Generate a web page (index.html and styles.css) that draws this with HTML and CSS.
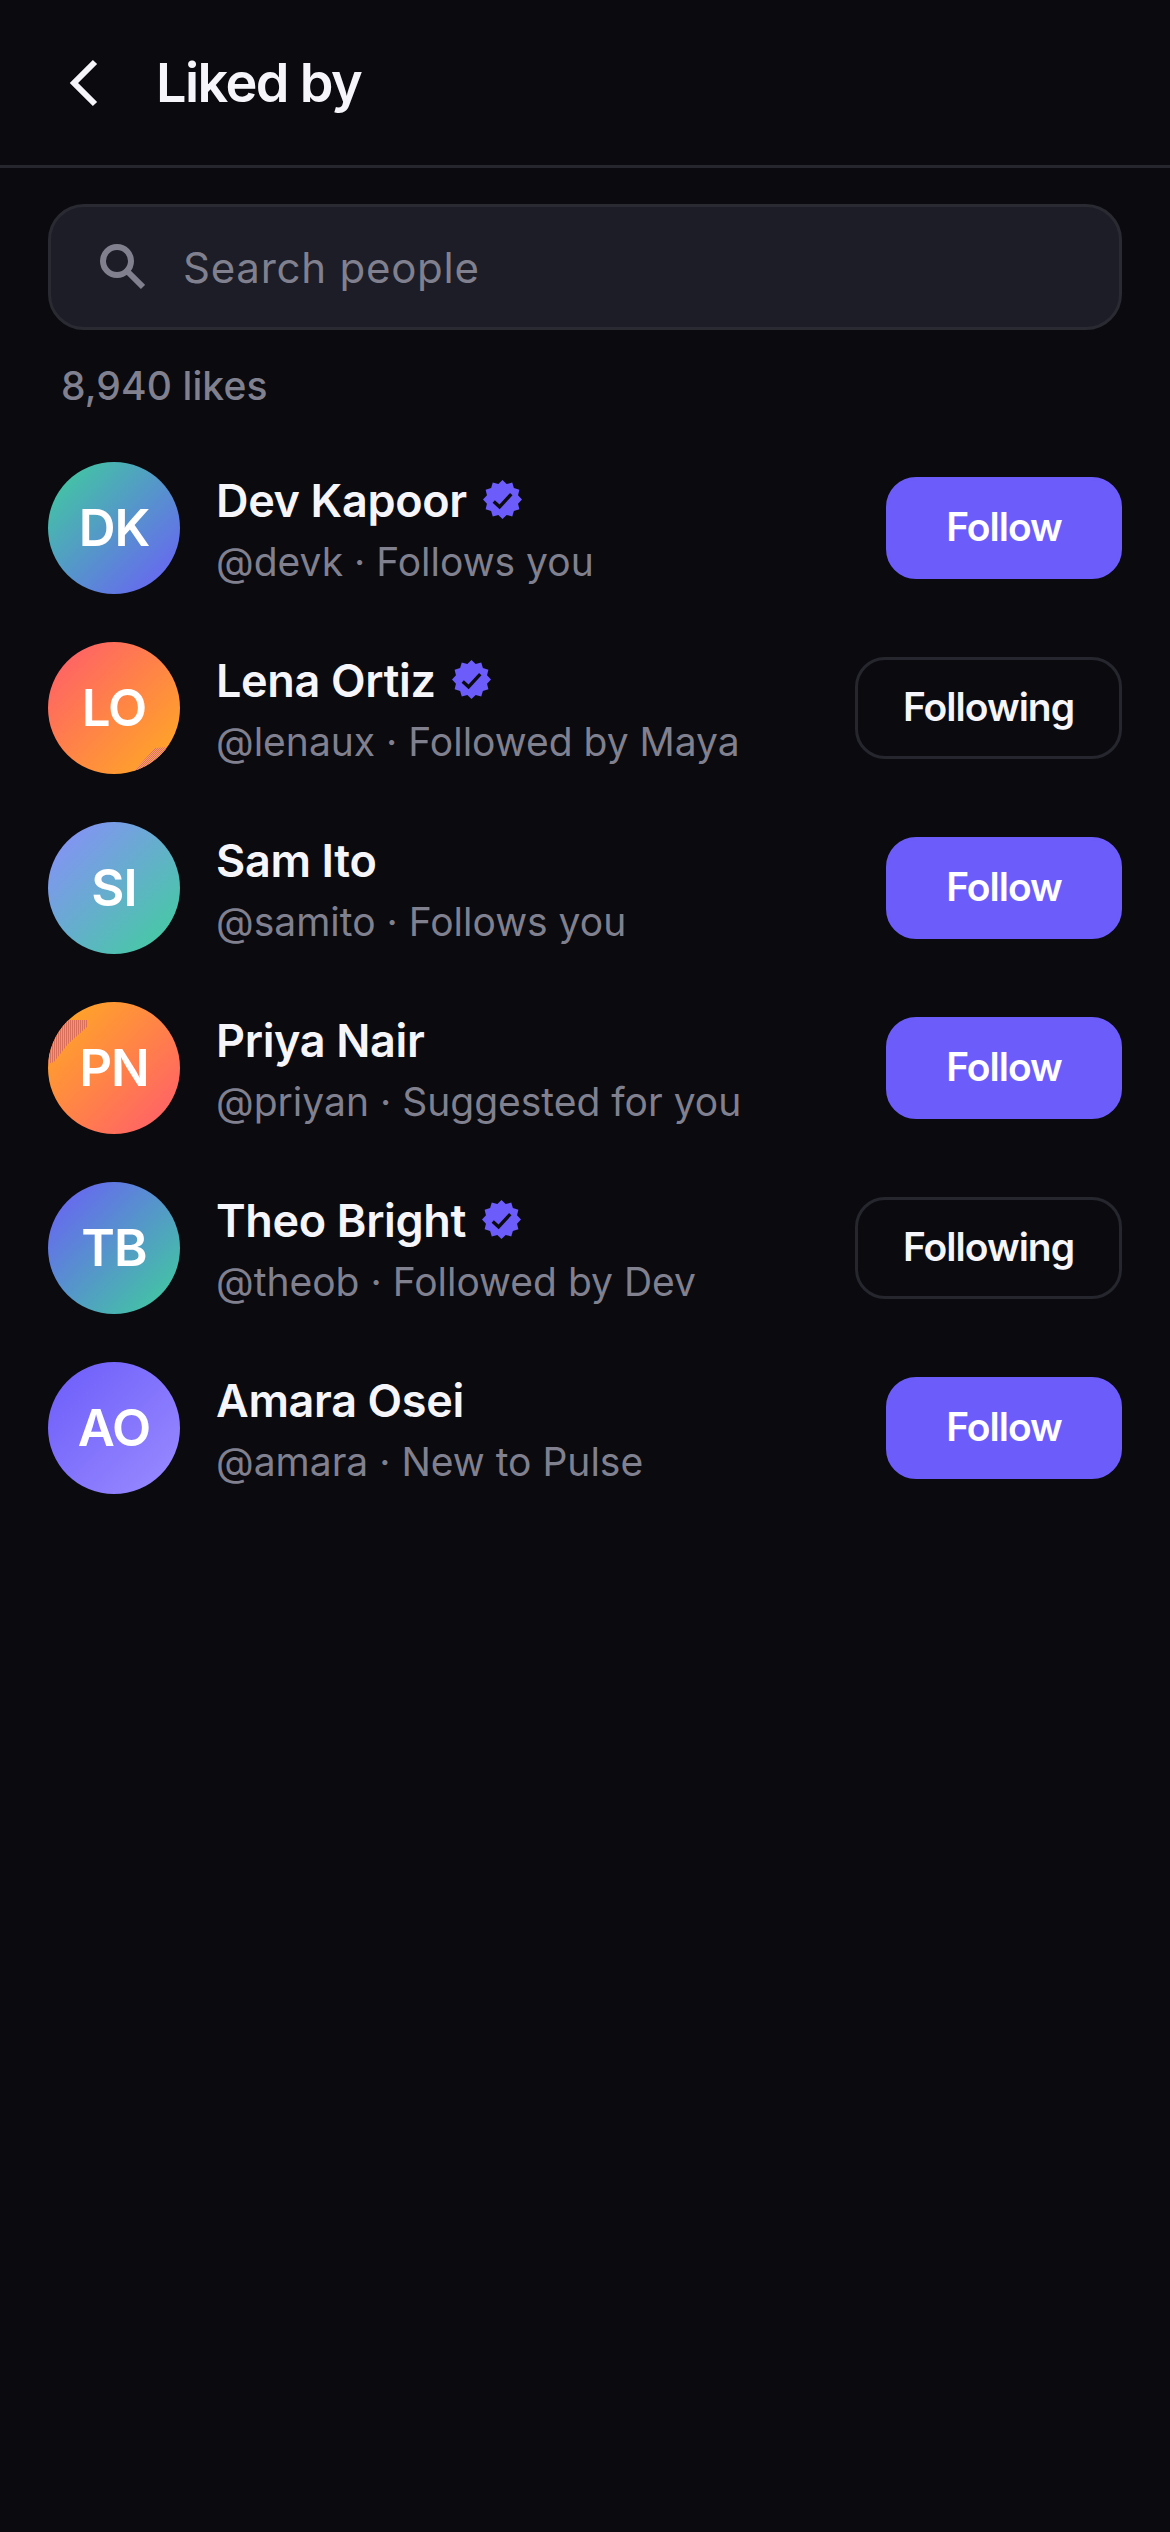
FILE: index.html
```html
<!DOCTYPE html>
<html lang="en">
<head>
  <meta charset="UTF-8" />
  <meta name="viewport" content="width=device-width, initial-scale=1.0"/>
  <title>Liked by</title>
  <link rel="stylesheet" href="styles.css">
</head>
<body>
  <svg class="defs" width="0" height="0" aria-hidden="true">
    <symbol id="badge" viewBox="0 0 40 40">
      <polygon fill="#6c5cfa" points="20,0 24.27,4.06 30,2.68 31.67,8.33 37.32,10 35.94,15.73 40,20 35.94,24.27 37.32,30 31.67,31.67 30,37.32 24.27,35.94 20,40 15.73,35.94 10,37.32 8.33,31.67 2.68,30 4.06,24.27 0,20 4.06,15.73 2.68,10 8.33,8.33 10,2.68 15.73,4.06"/>
      <path d="M11 22 L17 27.5 L29 14.5" fill="none" stroke="#0b0b10" stroke-width="3.4"/>
    </symbol>
  </svg>

  <header class="topbar">
    <button class="back" type="button" aria-label="Back">
      <svg width="30" height="48" viewBox="0 0 30 48"><path d="M26 3 L5 24 L26 45" fill="none" stroke="#f5f5fa" stroke-width="6"/></svg>
    </button>
    <h1>Liked by</h1>
  </header>

  <div class="search">
    <svg class="search-icon" width="46" height="46" viewBox="0 0 46 46"><circle cx="18" cy="17" r="14" fill="none" stroke="#80808f" stroke-width="6"/><path d="M28 27 L44 43" fill="none" stroke="#80808f" stroke-width="6"/></svg>
    <input type="text" placeholder="Search people" />
  </div>

  <p class="count">8,940 likes</p>

  <ul class="people">
    <li class="person">
      <div class="avatar teal-violet">DK</div>
      <div class="info">
        <div class="name">Dev Kapoor <svg class="badge"><use href="#badge"/></svg></div>
        <div class="sub">@devk · Follows you</div>
      </div>
      <button class="btn" type="button">Follow</button>
    </li>
    <li class="person">
      <div class="avatar coral-amber">LO</div>
      <div class="info">
        <div class="name">Lena Ortiz <svg class="badge"><use href="#badge"/></svg></div>
        <div class="sub">@lenaux · Followed by Maya</div>
      </div>
      <button class="btn following" type="button">Following</button>
    </li>
    <li class="person">
      <div class="avatar lilac-teal">SI</div>
      <div class="info">
        <div class="name">Sam Ito</div>
        <div class="sub">@samito · Follows you</div>
      </div>
      <button class="btn" type="button">Follow</button>
    </li>
    <li class="person">
      <div class="avatar amber-coral">PN</div>
      <div class="info">
        <div class="name">Priya Nair</div>
        <div class="sub">@priyan · Suggested for you</div>
      </div>
      <button class="btn" type="button">Follow</button>
    </li>
    <li class="person">
      <div class="avatar violet-teal">TB</div>
      <div class="info">
        <div class="name">Theo Bright <svg class="badge"><use href="#badge"/></svg></div>
        <div class="sub">@theob · Followed by Dev</div>
      </div>
      <button class="btn following" type="button">Following</button>
    </li>
    <li class="person">
      <div class="avatar violet-lilac">AO</div>
      <div class="info">
        <div class="name">Amara Osei</div>
        <div class="sub">@amara · New to Pulse</div>
      </div>
      <button class="btn" type="button">Follow</button>
    </li>
  </ul>
</body>
</html>
```

FILE: styles.css
```css
/* === Reset and Base === */
* {
  margin: 0;
  padding: 0;
  box-sizing: border-box;
  font-family: "Inter", "Liberation Sans", sans-serif;
}

body {
  background: #0a0a0f;
  min-height: 100vh;
  color: #f5f5fa;
}

.defs {
  position: absolute;
}

/* === Top bar === */
.topbar {
  display: flex;
  align-items: center;
  height: 168px;
  padding-left: 69px;
  border-bottom: 3px solid #26262e;
}

.back {
  display: flex;
  background: none;
  border: none;
  margin-right: 57px;
}

h1 {
  font-size: 54px;
  font-weight: 600;
  letter-spacing: -1.6px;
}

/* === Search === */
.search {
  display: flex;
  align-items: center;
  height: 126px;
  margin: 36px 48px 0;
  padding-left: 48px;
  background: #1c1d26;
  border: 3px solid #2a2a33;
  border-radius: 36px;
}

.search-icon {
  flex: none;
}

.search input {
  flex: 1;
  margin-left: 38px;
  background: none;
  border: none;
  outline: none;
  font-size: 42px;
  letter-spacing: 0.75px;
  color: #f5f5fa;
}

.search input::placeholder {
  color: #80808f;
  opacity: 1;
}

.count {
  margin: 32px 0 0 61px;
  font-size: 39px;
  font-weight: 500;
  line-height: 47px;
  letter-spacing: 0.1px;
  color: #80808f;
}

/* === List === */
.people {
  list-style: none;
  display: flex;
  flex-direction: column;
  gap: 48px;
  margin-top: 53px;
  padding: 0 48px;
}

.person {
  display: flex;
  align-items: center;
  height: 132px;
}

.avatar {
  flex: none;
  position: relative;
  overflow: hidden;
  display: flex;
  align-items: center;
  justify-content: center;
  width: 132px;
  height: 132px;
  padding-bottom: 1px;
  border-radius: 50%;
  font-size: 51px;
  font-weight: 600;
  letter-spacing: -1px;
  color: #fff;
}

.teal-violet { background: linear-gradient(135deg, #3ed09a, #6c5cfa); }
.coral-amber { background: linear-gradient(135deg, #ff5a6e, #ffad20); }
.lilac-teal { background: linear-gradient(135deg, #8c8cff, #3ed09a); }
.amber-coral { background: linear-gradient(135deg, #ffad20, #ff5a6e); }
.violet-teal { background: linear-gradient(135deg, #6c5cfa, #3ed09a); }
.violet-lilac { background: linear-gradient(135deg, #6c5cfa, #9a8cff); }

/* dithered smudges on two of the avatars */
.coral-amber::after {
  content: "";
  position: absolute;
  inset: 0;
  background: repeating-conic-gradient(#e2705c 0 25%, #f5a060 0 50%) 0 0 / 2px 2px;
  clip-path: polygon(83px 132px, 107px 106px, 119px 105px, 132px 105px, 132px 132px);
}

.amber-coral::after {
  content: "";
  position: absolute;
  inset: 0;
  background: repeating-linear-gradient(90deg, #d9705c 0 1px, #f29a58 1px 2px);
  clip-path: polygon(0 62px, 6px 60px, 20px 42px, 39px 25px, 39px 18px, 25px 18px, 0 18px);
}

.info {
  flex: 1;
  margin-left: 36px;
}

.name {
  display: flex;
  align-items: center;
  gap: 16px;
  height: 54px;
  margin-top: 2px;
  font-size: 45px;
  font-weight: 600;
  letter-spacing: -0.35px;
}

.badge {
  width: 39px;
  height: 39px;
  margin-top: -3px;
}

.sub {
  margin-top: 10px;
  font-size: 39px;
  line-height: 47px;
  color: #80808f;
}

/* === Buttons === */
.btn {
  flex: none;
  display: flex;
  align-items: center;
  justify-content: center;
  width: 236px;
  height: 102px;
  padding-bottom: 3px;
  background: #6c5cfa;
  border: 3px solid #6c5cfa;
  border-radius: 30px;
  font-size: 39px;
  font-weight: 600;
  letter-spacing: -1px;
  color: #fff;
}

.following {
  width: 267px;
  background: none;
  border-color: #26262e;
  color: #f5f5fa;
}
```
